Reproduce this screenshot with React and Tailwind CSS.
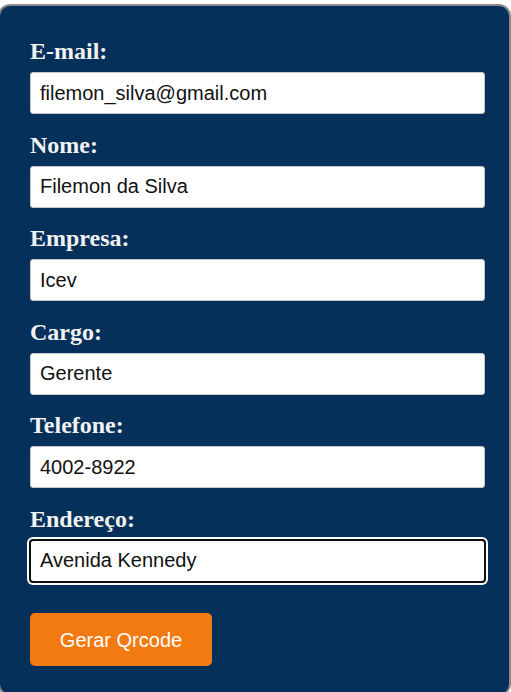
import React from 'react';

const fields = [
  { id: 'email', label: 'E-mail:', value: 'filemon_silva@gmail.com' },
  { id: 'nome', label: 'Nome:', value: 'Filemon da Silva' },
  { id: 'empresa', label: 'Empresa:', value: 'Icev' },
  { id: 'cargo', label: 'Cargo:', value: 'Gerente' },
  { id: 'telefone', label: 'Telefone:', value: '4002-8922' },
  { id: 'endereco', label: 'Endereço:', value: 'Avenida Kennedy', focused: true },
];

export default function App() {
  return (
    <div className="h-screen bg-white overflow-hidden">
      <form
        onSubmit={(e) => e.preventDefault()}
        className="mt-[4px] ml-[-2px] w-[513px] h-[692px] rounded-[12px] border-2 border-[#8a8a8a] bg-[#04305a] pl-[30px] pr-[24px] pt-[31px] flex flex-col"
      >
        {fields.map((f) => (
          <div key={f.id} className="flex flex-col mb-[16.5px]">
            <label
              htmlFor={f.id}
              className="font-['Liberation_Serif',serif] font-bold text-[24px] leading-[28px] text-[#f2f2f2] mb-[7px]"
            >
              {f.label}
            </label>
            <input
              id={f.id}
              defaultValue={f.value}
              className={`h-[42px] w-full rounded-[3px] border border-[#c8c8c8] bg-white px-[9px] font-['Liberation_Sans',Arial,sans-serif] text-[20px] text-[#111] ${
                f.focused
                  ? 'outline-2 outline-solid outline-[#101010] outline-offset-[-1px] shadow-[0_0_0_3px_white]'
                  : 'outline-none'
              }`}
            />
          </div>
        ))}
        <div className="pt-[15px]">
          <button
            type="submit"
            className="h-[53px] w-[182px] rounded-[5px] bg-[#f27a12] font-['Liberation_Sans',Arial,sans-serif] text-[20px] text-white"
          >
            Gerar Qrcode
          </button>
        </div>
      </form>
    </div>
  );
}
